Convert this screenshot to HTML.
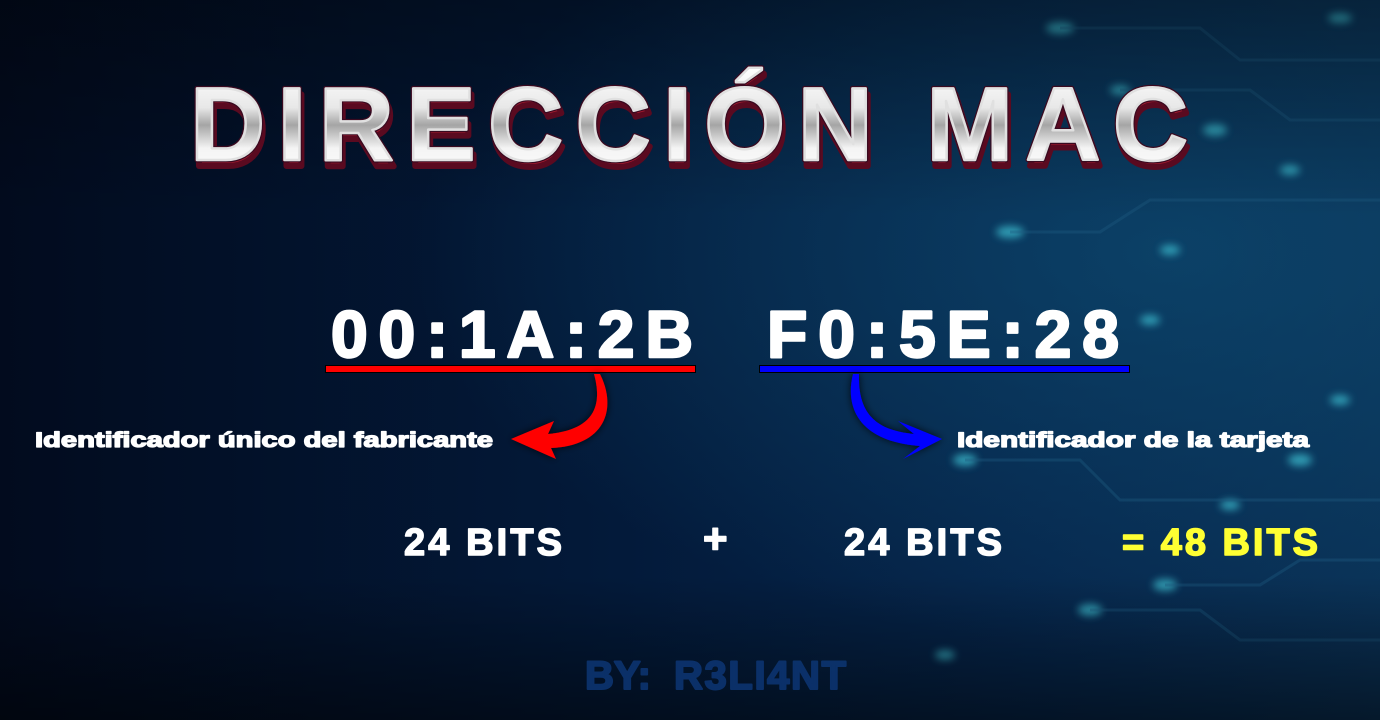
<!DOCTYPE html>
<html><head><meta charset="utf-8"><style>
html,body{margin:0;padding:0;background:#020d22;}
svg{display:block}
</style></head><body>
<svg width="1380" height="720" viewBox="0 0 1380 720" xmlns="http://www.w3.org/2000/svg" font-family="Liberation Sans, Arial, sans-serif" font-weight="bold">
<defs>
<linearGradient id="bg" x1="0" y1="0" x2="1" y2="0">
<stop offset="0" stop-color="#020b1e"/><stop offset="0.45" stop-color="#031a3a"/><stop offset="0.75" stop-color="#06264c"/><stop offset="1" stop-color="#0a3156"/>
</linearGradient>
<radialGradient id="glow" cx="0.85" cy="0.35" r="0.55">
<stop offset="0" stop-color="#0d4a70" stop-opacity="0.7"/><stop offset="1" stop-color="#0d4a70" stop-opacity="0"/>
</radialGradient>
<linearGradient id="vig" x1="0" y1="0" x2="0" y2="1">
<stop offset="0" stop-color="#000" stop-opacity="0.35"/><stop offset="0.3" stop-color="#000" stop-opacity="0"/><stop offset="0.8" stop-color="#000" stop-opacity="0"/><stop offset="1" stop-color="#000" stop-opacity="0.5"/>
</linearGradient>
<linearGradient id="chrome" x1="0" y1="0" x2="0" y2="1">
<stop offset="0" stop-color="#ffffff"/><stop offset="0.35" stop-color="#e8e8e8"/><stop offset="0.5" stop-color="#a5a5a5"/><stop offset="0.7" stop-color="#f4f4f4"/><stop offset="1" stop-color="#ffffff"/>
</linearGradient>
<filter id="blur"><feGaussianBlur stdDeviation="4"/></filter>
<filter id="sh"><feDropShadow dx="0" dy="0" stdDeviation="4" flood-color="#000" flood-opacity="0.8"/></filter>
</defs>
<rect width="1380" height="720" fill="url(#bg)"/>
<rect width="1380" height="720" fill="url(#glow)"/>
<g fill="#3fc6d8" filter="url(#blur)" opacity="0.7">
<ellipse cx="1060" cy="28" rx="14" ry="6"/><ellipse cx="1215" cy="130" rx="12" ry="6"/><ellipse cx="1290" cy="170" rx="10" ry="5"/>
<ellipse cx="1010" cy="232" rx="14" ry="6"/><ellipse cx="1170" cy="250" rx="10" ry="5"/><ellipse cx="1340" cy="18" rx="12" ry="5"/>
<ellipse cx="965" cy="460" rx="12" ry="6"/><ellipse cx="1300" cy="460" rx="12" ry="6"/><ellipse cx="1165" cy="585" rx="12" ry="6"/>
<ellipse cx="1090" cy="610" rx="12" ry="6"/><ellipse cx="945" cy="655" rx="10" ry="5"/><ellipse cx="1340" cy="400" rx="10" ry="5"/>
<ellipse cx="1150" cy="320" rx="10" ry="5"/><ellipse cx="1230" cy="505" rx="10" ry="5"/><ellipse cx="1120" cy="90" rx="10" ry="5"/>
</g>
<g stroke="#1d5a80" stroke-width="3" fill="none" opacity="0.4">
<path d="M1060 28 H1200 L1240 60 H1380"/><path d="M1010 232 H1100 L1150 200 H1380"/><path d="M965 460 H1080 L1120 500 H1380"/>
<path d="M1090 610 H1200 L1240 640 H1380"/><path d="M1165 585 H1260 L1300 560 H1380"/><path d="M1120 90 H1250 L1290 120 H1380"/>
</g>
<rect width="1380" height="720" fill="url(#vig)"/>

<!-- title -->
<text x="192" y="166" font-size="104" textLength="998" lengthAdjust="spacing" fill="#a51a2e" stroke="#5a0a20" stroke-width="6" stroke-linejoin="round">DIRECCIÓN MAC</text>
<text x="190" y="160" font-size="104" textLength="998" lengthAdjust="spacing" fill="url(#chrome)" stroke="#3a0a20" stroke-width="5" stroke-linejoin="round" paint-order="stroke">DIRECCIÓN MAC</text>
<text x="190" y="160" font-size="104" textLength="998" lengthAdjust="spacing" fill="url(#chrome)" stroke="#e0e0e0" stroke-width="2.5" stroke-linejoin="round">DIRECCIÓN MAC</text>

<!-- mac -->
<g fill="#fff" stroke="#fff" stroke-width="2.5" stroke-linejoin="round">
<text x="331" y="357" font-size="66" textLength="362" lengthAdjust="spacing">00:1A:2B</text>
<text x="767" y="357" font-size="66" textLength="352" lengthAdjust="spacing">F0:5E:28</text>
</g>
<rect x="325.5" y="365.5" width="370" height="7" fill="#ff0000" stroke="#000"/>
<rect x="759.5" y="365.5" width="370" height="7" fill="#0000ff" stroke="#000"/>

<!-- arrows -->
<g filter="url(#sh)">
<path d="M594 374 C604 410 590 430 548 434 L554 421 L511 439 L556 459 L551 448 C604 446 618 410 600 374 Z" fill="#ff0000"/>
<path d="M853 374 C844 410 862 442 920 446 L903 459 L942 439 L898 421 L914 434 C872 430 858 410 859 374 Z" fill="#0000ff"/>
</g>

<!-- labels -->
<g fill="#fff" stroke="#fff" stroke-width="1.3" stroke-linejoin="round">
<text x="35" y="447" font-size="21" textLength="458" lengthAdjust="spacingAndGlyphs">Identificador único del fabricante</text>
<text x="957" y="447" font-size="21" textLength="352" lengthAdjust="spacingAndGlyphs">Identificador de la tarjeta</text>
</g>

<g fill="#fff" stroke="#fff" stroke-width="1.5" stroke-linejoin="round">
<text x="404" y="555" font-size="38" textLength="158" lengthAdjust="spacing">24 BITS</text>
<text x="703" y="553" font-size="42">+</text>
<text x="844" y="555" font-size="38" textLength="158" lengthAdjust="spacing">24 BITS</text>
</g>
<text x="1122" y="555" font-size="38" textLength="196" lengthAdjust="spacing" fill="#ffff33" stroke="#ffff33" stroke-width="1.5" stroke-linejoin="round">= 48 BITS</text>

<g fill="#0c3470" stroke="#0c3470" stroke-width="2" stroke-linejoin="round" opacity="0.9">
<text x="585" y="689" font-size="40" textLength="66" lengthAdjust="spacing">BY:</text>
<text x="674" y="689" font-size="40" textLength="172" lengthAdjust="spacing">R3LI4NT</text>
</g>
</svg>
</body></html>
